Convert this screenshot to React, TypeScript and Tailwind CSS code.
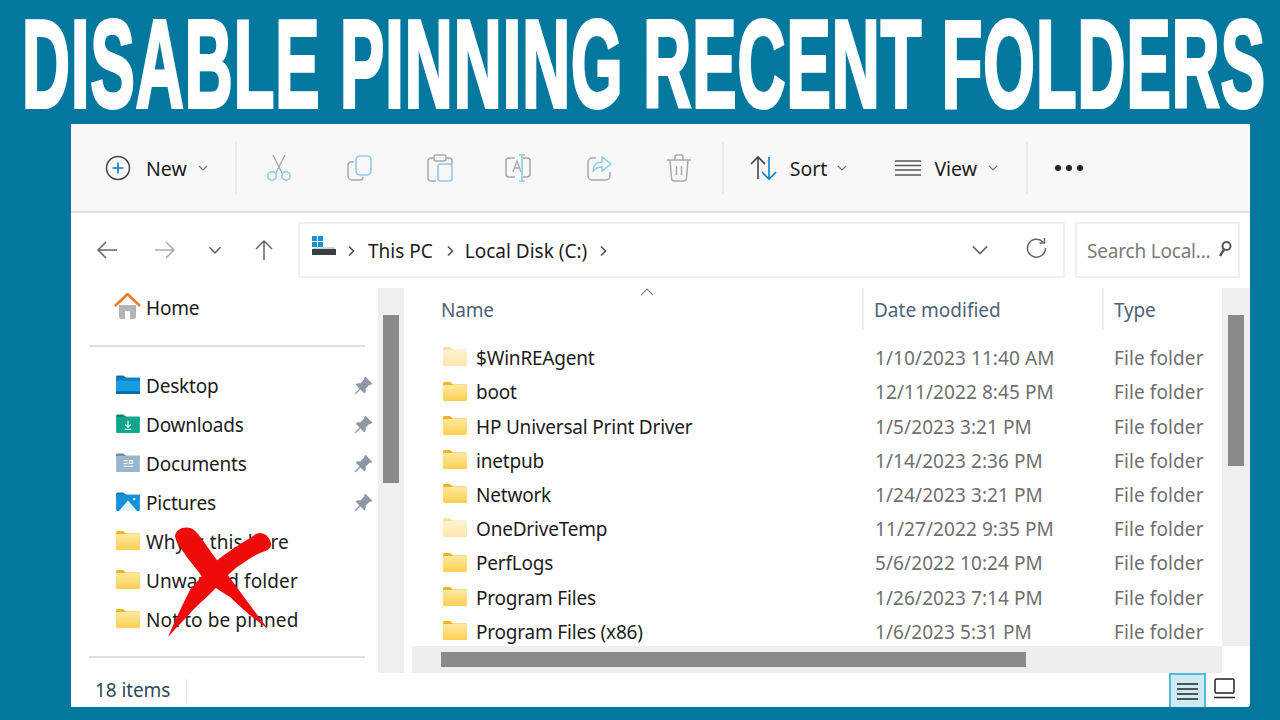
import React from "react";
import { BsPinAngleFill } from "react-icons/bs";

const FONT = "[font-family:'Noto_Sans','Open_Sans',sans-serif]";

function Folder({ faded = false }: { faded?: boolean }) {
  const id = faded ? "ff" : "fn";
  return (
    <svg width="24" height="19" viewBox="0 0 24 19" className="shrink-0">
      <defs>
        <linearGradient id={id} x1="0" y1="0" x2="0" y2="1">
          <stop offset="0" stopColor={faded ? "#fdf3d2" : "#ffe9a0"} />
          <stop offset="1" stopColor={faded ? "#fbe6ae" : "#fcd050"} />
        </linearGradient>
      </defs>
      <path d="M0 1.500a1.500 1.500 0 0 1 1.500-1.500h5.500l3 2.500h14v3H0z" fill={faded ? "#f6e1a4" : "#f1b41c"} />
      <rect x="0" y="3" width="24" height="16" rx="1" fill={`url(#${id})`} />
    </svg>
  );
}

function QuickFolder({ body, tab, children }: { body: string; tab: string; children?: React.ReactNode }) {
  return (
    <svg width="24" height="19" viewBox="0 0 25 20" className="shrink-0">
      <path d="M0 2a1.500 1.500 0 0 1 1.500-1.500h6l3 2.500h14.500v3H0z" fill={tab} />
      <rect x="0" y="3" width="25" height="17" rx="1" fill={body} />
      {children}
    </svg>
  );
}

function Chev({ size = 10, color = "#777", width = 1.2 }: { size?: number; color?: string; width?: number }) {
  return (
    <svg width={size} height={size} viewBox="0 0 10 10" className="shrink-0">
      <path d="M1 3l4 4 4-4" fill="none" stroke={color} strokeWidth={width} />
    </svg>
  );
}

function Crumb() {
  return (
    <svg width="8" height="12" viewBox="0 0 8 12" className="shrink-0">
      <path d="M2 1.500L6.500 6 2 10.500" fill="none" stroke="#555" strokeWidth="1.700" />
    </svg>
  );
}

const G = "#a9a9a9";
const B = "#8fcbe6";

function Sep() {
  return <div className="w-[2px] h-[52px] bg-[#ececec] shrink-0" />;
}

function Side({ icon, label, pin, wide }: { icon: React.ReactNode; label: string; pin?: boolean; wide?: boolean }) {
  return (
    <div className="h-[39px] flex items-center pl-[45px] relative">
      <div className="w-[30px] shrink-0 flex -mt-[3px]">{icon}</div>
      <span className={`text-[19px] text-[#1c1c1c] whitespace-nowrap mt-[2px] ${wide ? "tracking-[0.1px]" : ""}`}>{label}</span>
      {pin && (
        <span className="ml-auto mr-[5px] text-[#8c99a5] text-[20px]">
          <BsPinAngleFill />
        </span>
      )}
    </div>
  );
}

const files: [string, string, boolean?][] = [
  ["$WinREAgent", "1/10/2023 11:40 AM", true],
  ["boot", "12/11/2022 8:45 PM"],
  ["HP Universal Print Driver", "1/5/2023 3:21 PM"],
  ["inetpub", "1/14/2023 2:36 PM"],
  ["Network", "1/24/2023 3:21 PM"],
  ["OneDriveTemp", "11/27/2022 9:35 PM", true],
  ["PerfLogs", "5/6/2022 10:24 PM"],
  ["Program Files", "1/26/2023 7:14 PM"],
  ["Program Files (x86)", "1/6/2023 5:31 PM"],
];

export default function App() {
  return (
    <div className={`w-[1280px] h-[720px] overflow-hidden bg-[#03789f] flex flex-col tracking-[-0.2px] ${FONT}`}>
      <div className="h-[124px] shrink-0 flex items-center justify-center">
        <h1 className="[font-family:'Liberation_Sans',sans-serif] font-bold text-white text-[66.300px] leading-none whitespace-nowrap scale-y-[1.87] tracking-[1.070px] [-webkit-text-stroke:2.140px_white] mt-[5px] ml-[8px]">
          DISABLE PINNING RECENT FOLDERS
        </h1>
      </div>

      <div className="relative ml-[71px] w-[1179px] h-[583px] bg-white flex flex-col overflow-hidden rounded-br-[3px]">
        {/* command bar */}
        <div className="h-[89px] shrink-0 bg-[#f8f8f8] border-b-2 border-[#e3e3e3] flex items-center pt-[1px] text-[#1c1c1c] text-[19.500px] tracking-normal">
          <svg width="26" height="26" viewBox="0 0 26 26" className="ml-[34px] shrink-0">
            <circle cx="13" cy="13" r="11.500" fill="none" stroke="#444" strokeWidth="1.500" />
            <path d="M13 7.500v11M7.500 13h11" stroke="#0f80c4" strokeWidth="1.600" />
          </svg>
          <span className="ml-[15px] mt-[2px]">New</span>
          <span className="ml-[11px]"><Chev /></span>
          <div className="ml-[27px]"><Sep /></div>
          <svg width="26" height="28" viewBox="0 0 26 28" className="ml-[29px] shrink-0" fill="none">
            <path d="M7 1l9 18M19 1l-9 18" stroke={G} strokeWidth="1.400" />
            <circle cx="6" cy="22" r="4.200" stroke={B} strokeWidth="1.600" />
            <circle cx="20" cy="22" r="4.200" stroke={B} strokeWidth="1.600" />
          </svg>
          <svg width="26" height="26" viewBox="0 0 26 26" className="ml-[55px] shrink-0" fill="none">
            <path d="M7 7H4a3 3 0 0 0-3 3v11a4 4 0 0 0 4 4h8a3 3 0 0 0 3-3" stroke={G} strokeWidth="1.500" />
            <rect x="9" y="1" width="15" height="19" rx="4" stroke={B} strokeWidth="1.600" />
          </svg>
          <svg width="26" height="28" viewBox="0 0 26 28" className="ml-[54px] shrink-0" fill="none">
            <path d="M7 4H4a3 3 0 0 0-3 3v17a3 3 0 0 0 3 3h5M19 4h3a3 3 0 0 1 3 3v3" stroke={G} strokeWidth="1.500" />
            <rect x="7" y="1" width="12" height="6" rx="2" stroke={G} strokeWidth="1.500" />
            <rect x="11" y="10" width="14" height="17" rx="2.500" stroke={B} strokeWidth="1.600" />
          </svg>
          <svg width="30" height="28" viewBox="0 0 30 28" className="ml-[51px] shrink-0" fill="none">
            <path d="M11 4H5a3 3 0 0 0-3 3v13a3 3 0 0 0 3 3h6M19 4h4a3 3 0 0 1 3 3v13a3 3 0 0 1-3 3h-4" stroke={G} strokeWidth="1.500" />
            <path d="M9 18l4-11 4 11M10.500 14h5" stroke={G} strokeWidth="1.400" />
            <path d="M15 1h6M18 1v26M15 27h6" stroke={B} strokeWidth="1.600" />
          </svg>
          <svg width="26" height="26" viewBox="0 0 26 26" className="ml-[53px] shrink-0" fill="none">
            <path d="M9 3H5a4 4 0 0 0-4 4v14a4 4 0 0 0 4 4h14a4 4 0 0 0 4-4v-4" stroke={G} strokeWidth="1.500" />
            <path d="M15 2l9 7-9 7v-4c-4 0-7 1-9 5 0-6 3-10 9-10z" stroke={B} strokeWidth="1.500" />
          </svg>
          <svg width="26" height="28" viewBox="0 0 26 28" className="ml-[53px] shrink-0" fill="none" stroke={G} strokeWidth="1.500">
            <path d="M1 6h24M9 6V3a2 2 0 0 1 2-2h4a2 2 0 0 1 2 2v3M4 6l1.500 18a3 3 0 0 0 3 3h9a3 3 0 0 0 3-3L22 6M10.500 12v9M15.500 12v9" />
          </svg>
          <div className="ml-[30px]"><Sep /></div>
          <svg width="28" height="26" viewBox="0 0 28 26" className="ml-[26px] shrink-0" fill="none" strokeWidth="1.600">
            <path d="M8 24V2M1 9l7-7 7 7" stroke="#444" />
            <path d="M19 2v22M12 17l7 7 7-7" stroke="#0f80c4" />
          </svg>
          <span className="ml-[12px] mt-[2px]">Sort</span>
          <span className="ml-[10px]"><Chev /></span>
          <svg width="28" height="18" viewBox="0 0 28 18" className="ml-[47px] shrink-0" stroke="#555" strokeWidth="1.500">
            <path d="M1 2h26M1 6.500h26M1 11h26M1 16h26" />
          </svg>
          <span className="ml-[12px] mt-[2px]">View</span>
          <span className="ml-[11px]"><Chev /></span>
          <div className="ml-[28px]"><Sep /></div>
          <div className="ml-[27px] flex gap-[5px]">
            <span className="w-[6px] h-[6px] rounded-full bg-[#222]" />
            <span className="w-[6px] h-[6px] rounded-full bg-[#222]" />
            <span className="w-[6px] h-[6px] rounded-full bg-[#222]" />
          </div>
        </div>

        {/* address row */}
        <div className="h-[75px] shrink-0 flex items-start">
          <div className="h-[56px] mt-[9px] flex items-center shrink-0 w-[227px] pl-[25px]">
            <svg width="22" height="20" viewBox="0 0 22 20" fill="none" stroke="#666" strokeWidth="1.500" className="shrink-0">
              <path d="M21 10H2M10 2l-8 8 8 8" />
            </svg>
            <svg width="22" height="20" viewBox="0 0 22 20" fill="none" stroke="#aaa" strokeWidth="1.500" className="ml-[36px] shrink-0">
              <path d="M1 10h19M12 2l8 8-8 8" />
            </svg>
            <span className="ml-[32px]"><Chev size={14} color="#666" width={1.100} /></span>
            <svg width="20" height="22" viewBox="0 0 20 22" fill="none" stroke="#666" strokeWidth="1.500" className="ml-[32px] shrink-0">
              <path d="M10 21V2M2 10l8-8 8 8" />
            </svg>
          </div>
          <div className="h-[56px] mt-[9px] w-[767px] border-2 border-[#f0f0f0] flex items-center shrink-0 text-[19px] text-[#1c1c1c] pt-[2px] tracking-normal">
            <svg width="24" height="20" viewBox="0 0 24 20" className="ml-[12px] shrink-0 -mt-[10px]">
              <rect x="0" y="0" width="5" height="5" fill="#1591d8" />
              <rect x="6" y="0" width="5" height="5" fill="#1591d8" />
              <rect x="0" y="6" width="5" height="5" fill="#1591d8" />
              <rect x="6" y="6" width="5" height="5" fill="#1591d8" />
              <path d="M12 11h11v2H1v-1z" fill="#cfd6dc" />
              <rect x="0" y="13" width="24" height="6" fill="#3a3f44" />
            </svg>
            <span className="ml-[11px]"><Crumb /></span>
            <span className="ml-[13px]">This PC</span>
            <span className="ml-[13px]"><Crumb /></span>
            <span className="ml-[11px]">Local Disk (C:)</span>
            <span className="ml-[12px]"><Crumb /></span>
            <span className="ml-auto -mt-[2px]"><Chev size={18} color="#666" width={0.900} /></span>
            <svg width="22" height="22" viewBox="0 0 22 22" fill="none" stroke="#666" strokeWidth="1.500" className="ml-[36px] mr-[16px] shrink-0 -mt-[6px]">
              <path d="M18 5a9 9 0 1 0 2.500 6M19.500 1v5h-5" />
            </svg>
          </div>
          <div className="h-[56px] mt-[9px] ml-[10px] w-[165px] border-2 border-[#f0f0f0] flex items-center shrink-0 pl-[10px] pt-[2px] text-[19px] text-[#7b7b7b] whitespace-nowrap">
            <span>Search Local...</span>
            <svg width="14" height="18" viewBox="0 0 14 18" fill="none" className="ml-[8px] shrink-0 -mt-[4px]">
              <circle cx="8.500" cy="6" r="4" stroke="#555" strokeWidth="2" />
              <path d="M6 9.500L2 16" stroke="#555" strokeWidth="2.400" />
            </svg>
          </div>
        </div>

        {/* body */}
        <div className="h-[385px] shrink-0 flex">
          <div className="w-[307px] shrink-0">
            <Side
              label="Home"
              icon={
                <svg width="27" height="27" viewBox="0 0 27 27" className="-ml-[2px]">
                  <path d="M5 12h17v12a2 2 0 0 1-2 2h-4v-8h-5v8H7a2 2 0 0 1-2-2z" fill="#b4b4b4" />
                  <path d="M1 13L13.500 1 26 13" fill="none" stroke="#ee7a22" strokeWidth="2.600" />
                </svg>
              }
            />
            <div className="mt-[18px] ml-[18px] w-[276px] h-[2px] bg-[#dfdfdf]" />
            <div className="mt-[19px]">
              <Side
                pin
                label="Desktop"
                icon={
                  <QuickFolder body="#0f7fc2" tab="#0b6ea9">
                    <rect x="0" y="6" width="25" height="14" fill="#1a9ce0" />
                    <rect x="0" y="17" width="25" height="3" fill="#0f6aa5" />
                  </QuickFolder>
                }
              />
              <Side
                pin
                label="Downloads"
                icon={
                  <QuickFolder body="#12a58c" tab="#0f7f6c">
                    <path d="M12.500 7v7M9.500 11l3 3 3-3M9 16h7" stroke="#fff" strokeWidth="1.200" fill="none" />
                  </QuickFolder>
                }
              />
              <Side
                pin
                label="Documents"
                icon={
                  <QuickFolder body="#9ab6ce" tab="#6f8593">
                    <path d="M8 8h4M14 8h3v3h-3zM8 11h4M8 14h10" stroke="#fff" strokeWidth="1.200" fill="none" />
                  </QuickFolder>
                }
              />
              <Side
                pin
                label="Pictures"
                icon={
                  <QuickFolder body="#1591d8" tab="#0f78b8">
                    <path d="M3 20l9.500-11L22 20z" fill="#dff1fb" />
                    <circle cx="19" cy="7.500" r="1.200" fill="#fff" />
                  </QuickFolder>
                }
              />
              <Side wide label="Why is this here" icon={<Folder />} />
              <Side wide label="Unwanted folder" icon={<Folder />} />
              <Side wide label="Not to be pinned" icon={<Folder />} />
            </div>
            <div className="mt-[17px] ml-[18px] w-[276px] h-[2px] bg-[#dfdfdf]" />
          </div>
          <div className="w-[26px] shrink-0 bg-[#efefef] pt-[27px] flex justify-center">
            <div className="w-[16px] h-[168px] bg-[#8a8a8a]" />
          </div>
          <div className="w-[8px] shrink-0" />

          <div className="flex-1 flex flex-col min-w-0">
            <div className="h-[358px] flex min-h-0">
              <div className="flex-1 min-w-0 overflow-hidden">
                <div className="h-[53.400px] flex text-[19px] text-[#4d6279] relative">
                  <div className="w-[452px] shrink-0 pl-[29px] pt-[8px] border-r-2 border-[#f0f0f0] h-[42px]">Name</div>
                  <div className="w-[240px] shrink-0 pl-[10px] pt-[8px] border-r-2 border-[#f0f0f0] h-[42px] tracking-normal">Date modified</div>
                  <div className="pl-[10px] pt-[8px]">Type</div>
                  <svg width="14" height="8" viewBox="0 0 14 8" className="absolute left-[228px] top-0" fill="none" stroke="#888" strokeWidth="1.200">
                    <path d="M1 7l6-6 6 6" />
                  </svg>
                </div>
                {files.map(([n, d, faded]) => (
                  <div key={n} className="h-[34.200px] flex items-center text-[19px] whitespace-nowrap">
                    <div className="w-[64px] pl-[31px] shrink-0 flex -mt-[3px]"><Folder faded={!!faded} /></div>
                    <div className="w-[399px] shrink-0 text-[#1c1c1c]">{n}</div>
                    <div className="w-[239px] shrink-0 text-[#6f6f6f] tracking-[0.08px]">{d}</div>
                    <div className="text-[#6f6f6f] tracking-[0.1px]">File folder</div>
                  </div>
                ))}
              </div>
              <div className="w-[28px] shrink-0 bg-[#efefef] pt-[27px] flex justify-center">
                <div className="w-[16px] h-[151px] bg-[#8a8a8a]" />
              </div>
            </div>
            <div className="h-[27px] w-[810px] bg-[#eeeeee] pt-[6px] pl-[29px]">
              <div className="h-[15px] w-[585px] bg-[#8a8a8a]" />
            </div>
          </div>
        </div>

        {/* status bar */}
        <div className="flex-1 flex items-center text-[19px] text-[#30475e] relative">
          <span className="ml-[24px] tracking-[-0.1px]">18 items</span>
          <div className="ml-[16px] w-[1px] h-[24px] bg-[#eeeeee]" />
          <div className="ml-auto mr-[15px] flex items-center gap-[8px] self-end">
            <div className="w-[37px] h-[34px] bg-[#cfe9f5] border-2 border-b-0 border-[#55b9dc] flex items-center justify-center">
              <svg width="21" height="18" viewBox="0 0 21 18" stroke="#222" strokeWidth="1.500"><path d="M0 2h21M0 7h21M0 12h21M0 17h21" /></svg>
            </div>
            <svg width="21" height="21" viewBox="0 0 21 21" fill="none" stroke="#222" strokeWidth="1.500" className="mb-[4px]">
              <rect x="1" y="1" width="19" height="14" rx="1.500" />
              <path d="M0 19.500h21" />
            </svg>
          </div>
        </div>

        {/* red cross over the sidebar */}
        <svg width="120" height="120" viewBox="0 0 120 120" className="absolute left-[90px] top-[398px]">
          <path
            d="M14 15C14 6 26 3 33 8C40 14 48 28 56 38C72 60 90 85 107 107C92 96 80 86 69 75C58 68 48 62 42 56C32 42 20 30 14 15Z"
            fill="#f00b0b"
          />
          <path
            d="M91 15C97 8 107 10 110 21C111 27 105 29 99 31C90 35 84 40 76 45C70 50 64 56 59 61C50 72 42 78 32 88C24 97 14 107 7 115C14 98 22 82 29 68C36 60 42 52 49 45C55 39 60 35 66 31C74 25 82 20 91 15Z"
            fill="#f00b0b"
          />
        </svg>
      </div>
    </div>
  );
}
